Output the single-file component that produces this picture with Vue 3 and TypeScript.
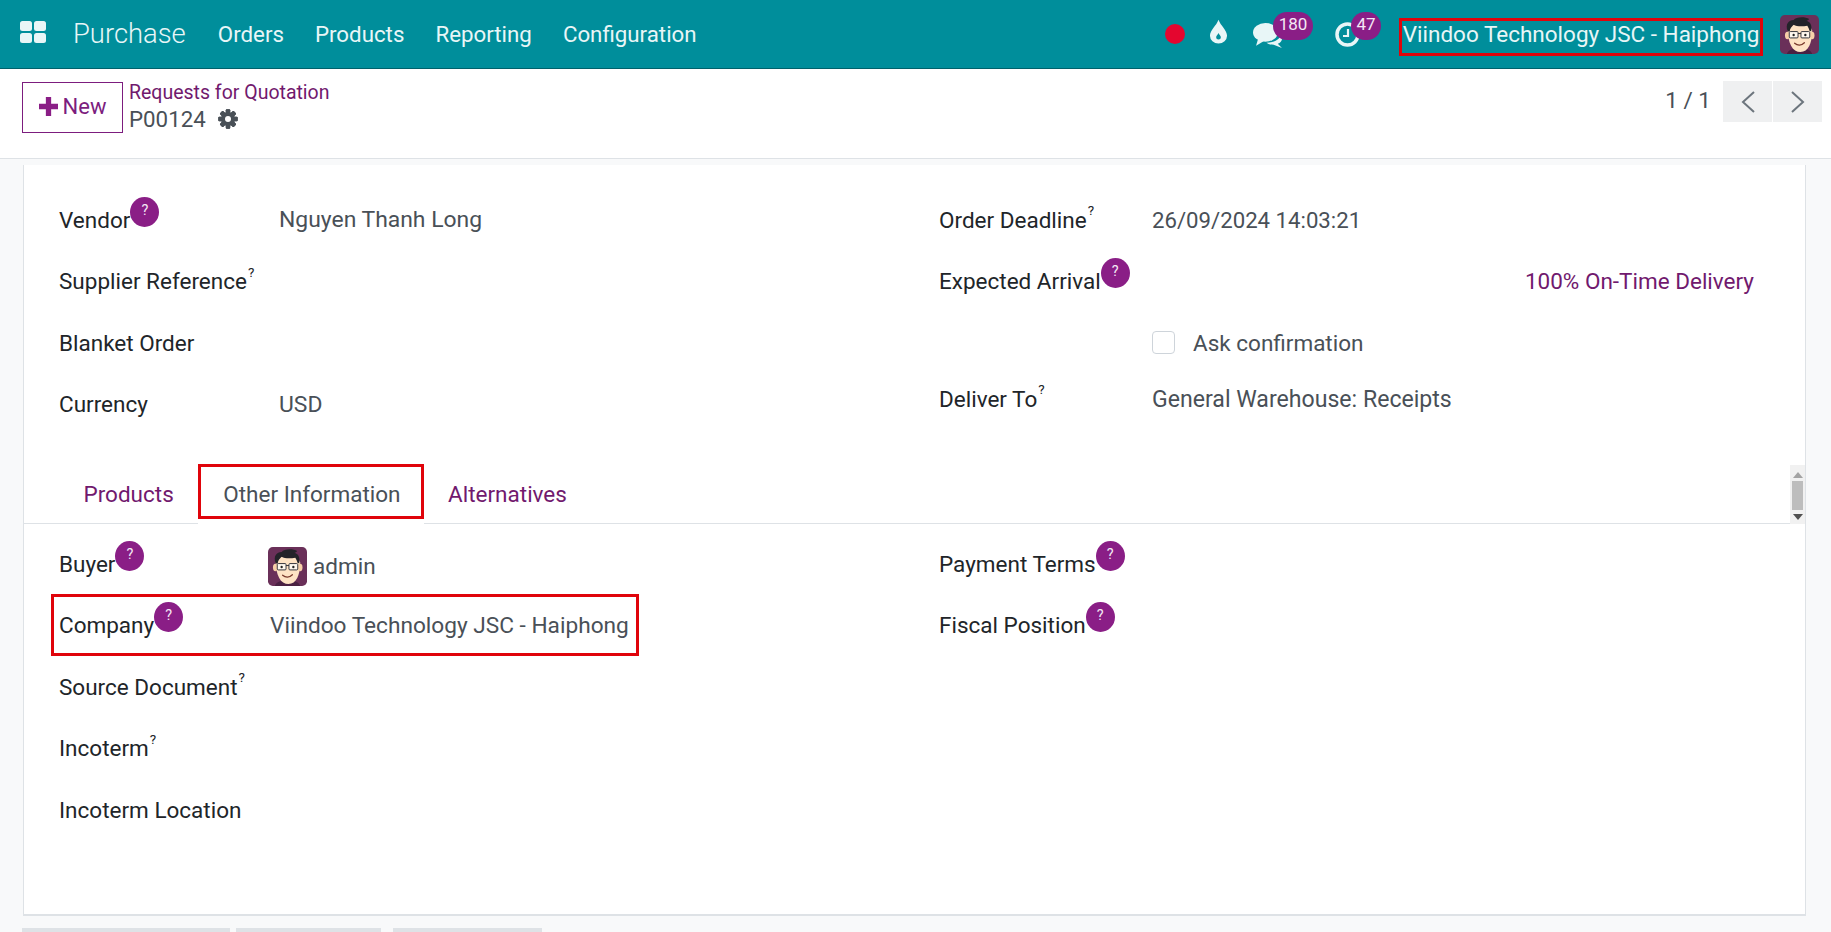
<script setup lang="ts">
interface Field {
  label: string
  hint?: 'sup' | 'badge'
  value?: string
  kind?: 'avatar' | 'link' | 'check' | 'short' | 'date'
}
const menus: string[] = ['Orders', 'Products', 'Reporting', 'Configuration']
const headLeft: Field[] = [
  { label: 'Vendor', hint: 'badge', value: 'Nguyen Thanh Long' },
  { label: 'Supplier Reference', hint: 'sup' },
  { label: 'Blanket Order' },
  { label: 'Currency', value: 'USD' },
]
const headRight: Field[] = [
  { label: 'Order Deadline', hint: 'sup', value: '26/09/2024 14:03:21', kind: 'date' },
  { label: 'Expected Arrival', hint: 'badge', value: '100% On-Time Delivery', kind: 'link' },
  { label: '', value: 'Ask confirmation', kind: 'check' },
  { label: 'Deliver To', hint: 'sup', value: 'General Warehouse: Receipts', kind: 'short' },
]
const tabLeft: Field[] = [
  { label: 'Buyer', hint: 'badge', value: 'admin', kind: 'avatar' },
  { label: 'Company', hint: 'badge', value: 'Viindoo Technology JSC - Haiphong' },
  { label: 'Source Document', hint: 'sup' },
  { label: 'Incoterm', hint: 'sup' },
  { label: 'Incoterm Location' },
]
const tabRight: Field[] = [
  { label: 'Payment Terms', hint: 'badge' },
  { label: 'Fiscal Position', hint: 'badge' },
]
const tabs: string[] = ['Products', 'Other Information', 'Alternatives']
const gearTeeth: number[] = [0, 45, 90, 135, 180, 225, 270, 315]
</script>

<template>
  <div class="app">
    <svg class="defs" width="0" height="0" aria-hidden="true">
      <symbol id="face" viewBox="0 0 40 40">
        <rect width="40" height="40" rx="5" fill="#6a3059" />
        <path d="M7 40c1-4 6-6 13-6s12 2 13 6z" fill="#4a2142" />
        <path d="M8 15c0 14 5 23 13 23s12-9 12-22l-3-6H12z" fill="#fee3c4" />
        <ellipse cx="7.500" cy="21" rx="2.400" ry="3.800" fill="#f7cfa8" />
        <ellipse cx="33" cy="21" rx="2.400" ry="3.800" fill="#f7cfa8" />
        <path d="M8 17C5 9 9 5 14 5c2-3 11-4 16-1-1 1-2 2-3 2 4 1 6 4 5 11l-2-1c0-2-1-3-2-5-5 1-11 1-14-1-2 2-4 4-4 7z" fill="#232329" />
        <rect x="9.500" y="17" width="9" height="6.500" rx="1" fill="#fff8ee" stroke="#33333a" stroke-width="1" />
        <rect x="21.500" y="17" width="9" height="6.500" rx="1" fill="#fff8ee" stroke="#33333a" stroke-width="1" />
        <path d="M18.500 19h3" stroke="#33333a" stroke-width="1" />
        <circle cx="14" cy="20.500" r="1.200" fill="#222" />
        <circle cx="26" cy="20.500" r="1.200" fill="#222" />
        <path d="M15 29c3 2.500 7 2.500 10-.5" fill="none" stroke="#7a3a2c" stroke-width="1.300" stroke-linecap="round" />
      </symbol>
    </svg>

    <header class="navbar">
      <svg class="apps" viewBox="0 0 26 22" aria-label="Apps">
        <rect width="12" height="10" rx="2.500" /><rect x="14" width="12" height="10" rx="2.500" />
        <rect y="12" width="12" height="10" rx="2.500" /><rect x="14" y="12" width="12" height="10" rx="2.500" />
      </svg>
      <span class="brand">Purchase</span>
      <nav class="menu"><a v-for="m in menus" :key="m">{{ m }}</a></nav>
      <div class="systray">
        <span class="dot"></span>
        <svg class="drop" viewBox="0 0 20 25">
          <path d="M10 0c2 6 9 11 9 17a9 8 0 0 1-18 0C1 11 8 6 10 0z" />
          <path d="M10 14c.8 2 2.500 3 2.500 4.500a2.500 2.500 0 0 1-5 0C7.500 17 9.200 16 10 14z" fill="#008e9b" />
        </svg>
        <span class="tray-item">
          <svg class="chat" viewBox="0 0 30 25">
            <ellipse cx="12" cy="10" rx="12" ry="9" />
            <path d="M5 16l-2 7 8-5z" />
            <path d="M27 12c2.500 4 .5 8-3 9l4 4-8-3c-3 0-6-1-7-2 7 0 13-3 14-8z" />
          </svg>
          <b class="count wide">180</b>
        </span>
        <span class="tray-item clock-item">
          <svg class="clock" viewBox="0 0 25 25">
            <circle cx="12.500" cy="12.500" r="10.500" fill="none" stroke="#e8f6f7" stroke-width="3.500" />
            <path d="M13 7v7H8" fill="none" stroke="#e8f6f7" stroke-width="2.200" />
          </svg>
          <b class="count">47</b>
        </span>
        <span class="company">Viindoo Technology JSC - Haiphong</span>
        <svg class="user"><use href="#face" /></svg>
      </div>
    </header>

    <section class="control">
      <button class="new" type="button">
        <svg viewBox="0 0 18 18"><path d="M6.500 0h5v6.500H18v5h-6.500V18h-5v-6.500H0v-5h6.500z" /></svg>
        New
      </button>
      <div class="crumbs">
        <a>Requests for Quotation</a>
        <div class="record">
          <span>P00124</span>
          <svg class="gear" viewBox="0 0 20 20">
            <rect v-for="t in gearTeeth" :key="t" x="7.800" y="0.300" width="4.400" height="19.400" rx="1" :transform="`rotate(${t} 10 10)`" />
            <circle cx="10" cy="10" r="5.200" fill="none" stroke="#495057" stroke-width="3.600" />
            <circle cx="10" cy="10" r="3" fill="#fff" />
          </svg>
        </div>
      </div>
      <div class="pager">
        <span>1 / 1</span>
        <div class="pager-btns">
          <button type="button"><svg viewBox="0 0 16 24"><path d="M14 2L3 12l11 10" /></svg></button>
          <button type="button"><svg viewBox="0 0 16 24"><path d="M2 2l11 10L2 22" /></svg></button>
        </div>
      </div>
    </section>

    <main class="sheet">
      <div class="head-grid">
        <div class="col">
          <div v-for="f in headLeft" :key="f.label" class="row">
            <label class="lab">{{ f.label }}<sup v-if="f.hint === 'sup'">?</sup><i v-if="f.hint === 'badge'" class="q">?</i></label>
            <span class="val">{{ f.value }}</span>
          </div>
        </div>
        <div class="col right">
          <div v-for="f in headRight" :key="f.value" class="row" :class="{ short: f.kind === 'short' }">
            <label class="lab">{{ f.label }}<sup v-if="f.hint === 'sup'">?</sup><i v-if="f.hint === 'badge'" class="q">?</i></label>
            <a v-if="f.kind === 'link'" class="val stat">{{ f.value }}</a>
            <span v-else-if="f.kind === 'check'" class="val check"><span class="box"></span>{{ f.value }}</span>
            <span v-else class="val" :class="{ date: f.kind === 'date', wide: f.kind === 'short' }">{{ f.value }}</span>
          </div>
        </div>
      </div>

      <div class="tabs">
        <a v-for="(t, i) in tabs" :key="t" class="tab" :class="{ active: i === 1 }">{{ t }}</a>
        <div class="scroll">
          <i class="up"></i>
          <i class="thumb"></i>
          <i class="down"></i>
        </div>
      </div>

      <div class="tab-grid">
        <div class="col narrow">
          <div v-for="f in tabLeft" :key="f.label" class="row">
            <label class="lab">{{ f.label }}<sup v-if="f.hint === 'sup'">?</sup><i v-if="f.hint === 'badge'" class="q">?</i></label>
            <span v-if="f.kind === 'avatar'" class="val who"><svg class="mini"><use href="#face" /></svg>{{ f.value }}</span>
            <span v-else class="val company-val">{{ f.value }}</span>
          </div>
        </div>
        <div class="col right">
          <div v-for="f in tabRight" :key="f.label" class="row">
            <label class="lab">{{ f.label }}<i class="q">?</i></label>
          </div>
        </div>
      </div>

      <span class="mark"></span>
    </main>

    <div class="chatter-tabs">
      <span class="t1"></span><span class="t2"></span><span class="t3"></span>
    </div>
  </div>
</template>

<style>
html, body { margin: 0; background: #f8f9fa; overflow: hidden; }
</style>

<style scoped>
.app { height: 932px; overflow: hidden; font-family: Roboto, "Liberation Sans", sans-serif; font-size: 22.500px; color: #212529; background: #f8f9fa; position: relative; }
.defs { position: absolute; }

.navbar { height: 69px; box-sizing: border-box; background: #008e9b; border-bottom: 1px solid #00616b; display: flex; align-items: center; color: #e8f6f7; padding-left: 20px; }
.apps { width: 26px; height: 22px; fill: #e8f6f7; margin-top: -5px; }
.brand { font-size: 27.400px; font-weight: 300; margin-left: 27px; margin-top: -1px; }
.menu { display: flex; gap: 31px; margin-left: 32px; font-size: 22.300px; margin-top: -1px; }
.systray { margin-left: auto; display: flex; align-items: center; height: 100%; }
.dot { width: 20px; height: 20px; border-radius: 50%; background: #e4062f; margin-top: -1px; }
.drop { width: 19px; height: 25px; fill: #e8f6f7; margin-left: 24px; margin-top: -5px; }
.tray-item { display: flex; position: relative; margin-left: 25px; }
.chat { width: 31px; height: 26px; fill: #e8f6f7; margin-top: 1px; }
.clock-item { margin-left: 51px; }
.clock { width: 25px; height: 25px; margin-top: 1px; }
.count { position: absolute; left: 20px; top: -9px; height: 28px; min-width: 30px; padding: 0 1px; box-sizing: border-box; border-radius: 14px; background: #8a1e86; color: #f4e8f4; font-size: 17px; font-weight: 400; text-align: center; line-height: 24px; }
.count.wide { width: 40px; }
.clock-item .count { left: 16px; }
.company { margin-left: 39px; width: 364px; height: 38px; box-sizing: border-box; border: 3px solid #e0040b; display: flex; align-items: center; justify-content: center; white-space: nowrap; margin-top: 6px; padding-bottom: 6px; }
.user { width: 39px; height: 39px; margin-left: 17px; margin-right: 12px; margin-top: 1px; }

.control { height: 90px; box-sizing: border-box; background: #fff; border-bottom: 1px solid #dee2e6; display: flex; align-items: flex-start; padding-left: 22px; position: relative; }
.new { margin-top: 13px; width: 101px; height: 51px; background: #fff; border: 1px solid #7c1d7e; color: #7c1d7e; font: 400 22px Roboto, sans-serif; display: flex; align-items: center; justify-content: center; gap: 5px; padding: 0 0 2px; }
.new svg { width: 19px; height: 19px; fill: #8a1e86; }
.crumbs { margin-left: 6px; margin-top: 11px; display: flex; flex-direction: column; }
.crumbs a { color: #71196e; font-size: 19.500px; line-height: 26px; }
.record { display: flex; align-items: center; gap: 12px; font-size: 22.300px; color: #495057; line-height: 28px; margin-top: -1px; }
.gear { width: 20px; height: 20px; fill: #495057; }
.pager { margin-left: auto; margin-right: 9px; margin-top: 12px; display: flex; align-items: flex-start; gap: 12px; color: #495057; }
.pager > span { line-height: 39px; }
.pager-btns { display: flex; gap: 1px; }
.pager-btns button { width: 49px; height: 41px; border: 0; padding: 0; background: #eff0f1; display: flex; align-items: center; justify-content: center; }
.pager-btns svg { width: 16px; height: 24px; fill: none; stroke: #6c757d; stroke-width: 2; }

.sheet { margin: 6px 0 0 23px; width: 1783px; height: 751px; box-sizing: border-box; background: #fff; border-left: 1px solid #dee2e6; border-right: 1px solid #dee2e6; border-bottom: 2px solid #dee2e6; position: relative; padding-top: 24px; }
.head-grid, .tab-grid { display: grid; grid-template-columns: 880px 1fr; padding-left: 35px; }
.row { display: grid; grid-template-columns: 220px 1fr; height: 61.500px; align-items: center; }
.col.right .row { grid-template-columns: 213px 1fr; }
.col.narrow .row { grid-template-columns: 211px 1fr; }
.row.short { height: 51px; }
.lab { white-space: nowrap; display: flex; align-items: center; }
.lab sup { font-size: 13.500px; line-height: 1; position: relative; top: -9px; margin-left: 1px; }
.q { display: block; flex: none; width: 29px; height: 30px; border-radius: 50%; background: #8a1e86; color: #f4e8f4; font-style: normal; font-size: 14.500px; line-height: 28px; text-align: center; position: relative; top: -8px; }
.val { color: #495057; white-space: nowrap; font-size: 22.900px; }
.val.date { font-size: 22.200px; }
.val.wide { font-size: 23.100px; }
.company-val { font-size: 22.650px; }
.stat { color: #71196e; text-align: right; padding-right: 51px; font-size: 22.500px; }
.check { display: flex; align-items: center; gap: 18px; font-size: 22.500px; }
.box { width: 21px; height: 21px; border: 1px solid #ced4da; border-radius: 4px; background: #fff; }
.who { display: flex; align-items: center; gap: 6px; margin-left: -2px; margin-top: 5px; font-size: 22.500px; }
.mini { width: 39px; height: 39px; }

.tabs { margin-top: 29px; height: 60px; box-sizing: border-box; border-bottom: 1px solid #dee2e6; padding-left: 35px; display: flex; align-items: flex-start; width: 1781px; position: relative; }
.tab { height: 59px; box-sizing: border-box; padding: 1px 24.500px 0; display: flex; align-items: center; color: #71196e; font-size: 22.500px; }
.tab.active { color: #495057; background: #fff; height: 55px; border: 3px solid #e0040b; padding: 5px 20px 0 22px; position: relative; }
.tab.active::after { content: ""; position: absolute; left: -3px; right: -3px; top: 52px; height: 6px; background: #fff; }
.scroll { position: absolute; right: 0; top: 1px; bottom: -1px; width: 15px; background: #f1f1f1; display: flex; flex-direction: column; align-items: center; }
.scroll i { display: block; }
.up { margin-top: 7px; border: 5px solid transparent; border-top: 0; border-bottom: 6px solid #a3a3a3; width: 0; height: 0; }
.thumb { width: 11px; height: 29px; background: #bdbdbd; margin-top: 3px; }
.down { margin-top: 4px; border: 5px solid transparent; border-bottom: 0; border-top: 6px solid #505050; width: 0; height: 0; }

.tab-grid { padding-top: 9px; }
.mark { position: absolute; pointer-events: none; box-sizing: border-box; border: 3px solid #e0040b; left: 27px; top: 429px; width: 588px; height: 62px; }

.chatter-tabs { display: flex; margin: 12px 0 0 22px; height: 30px; }
.chatter-tabs span { background: #dee2e6; height: 30px; display: block; }
.t1 { width: 208px; margin-right: 6px; }
.t2 { width: 145px; margin-right: 12px; }
.t3 { width: 149px; }
</style>
